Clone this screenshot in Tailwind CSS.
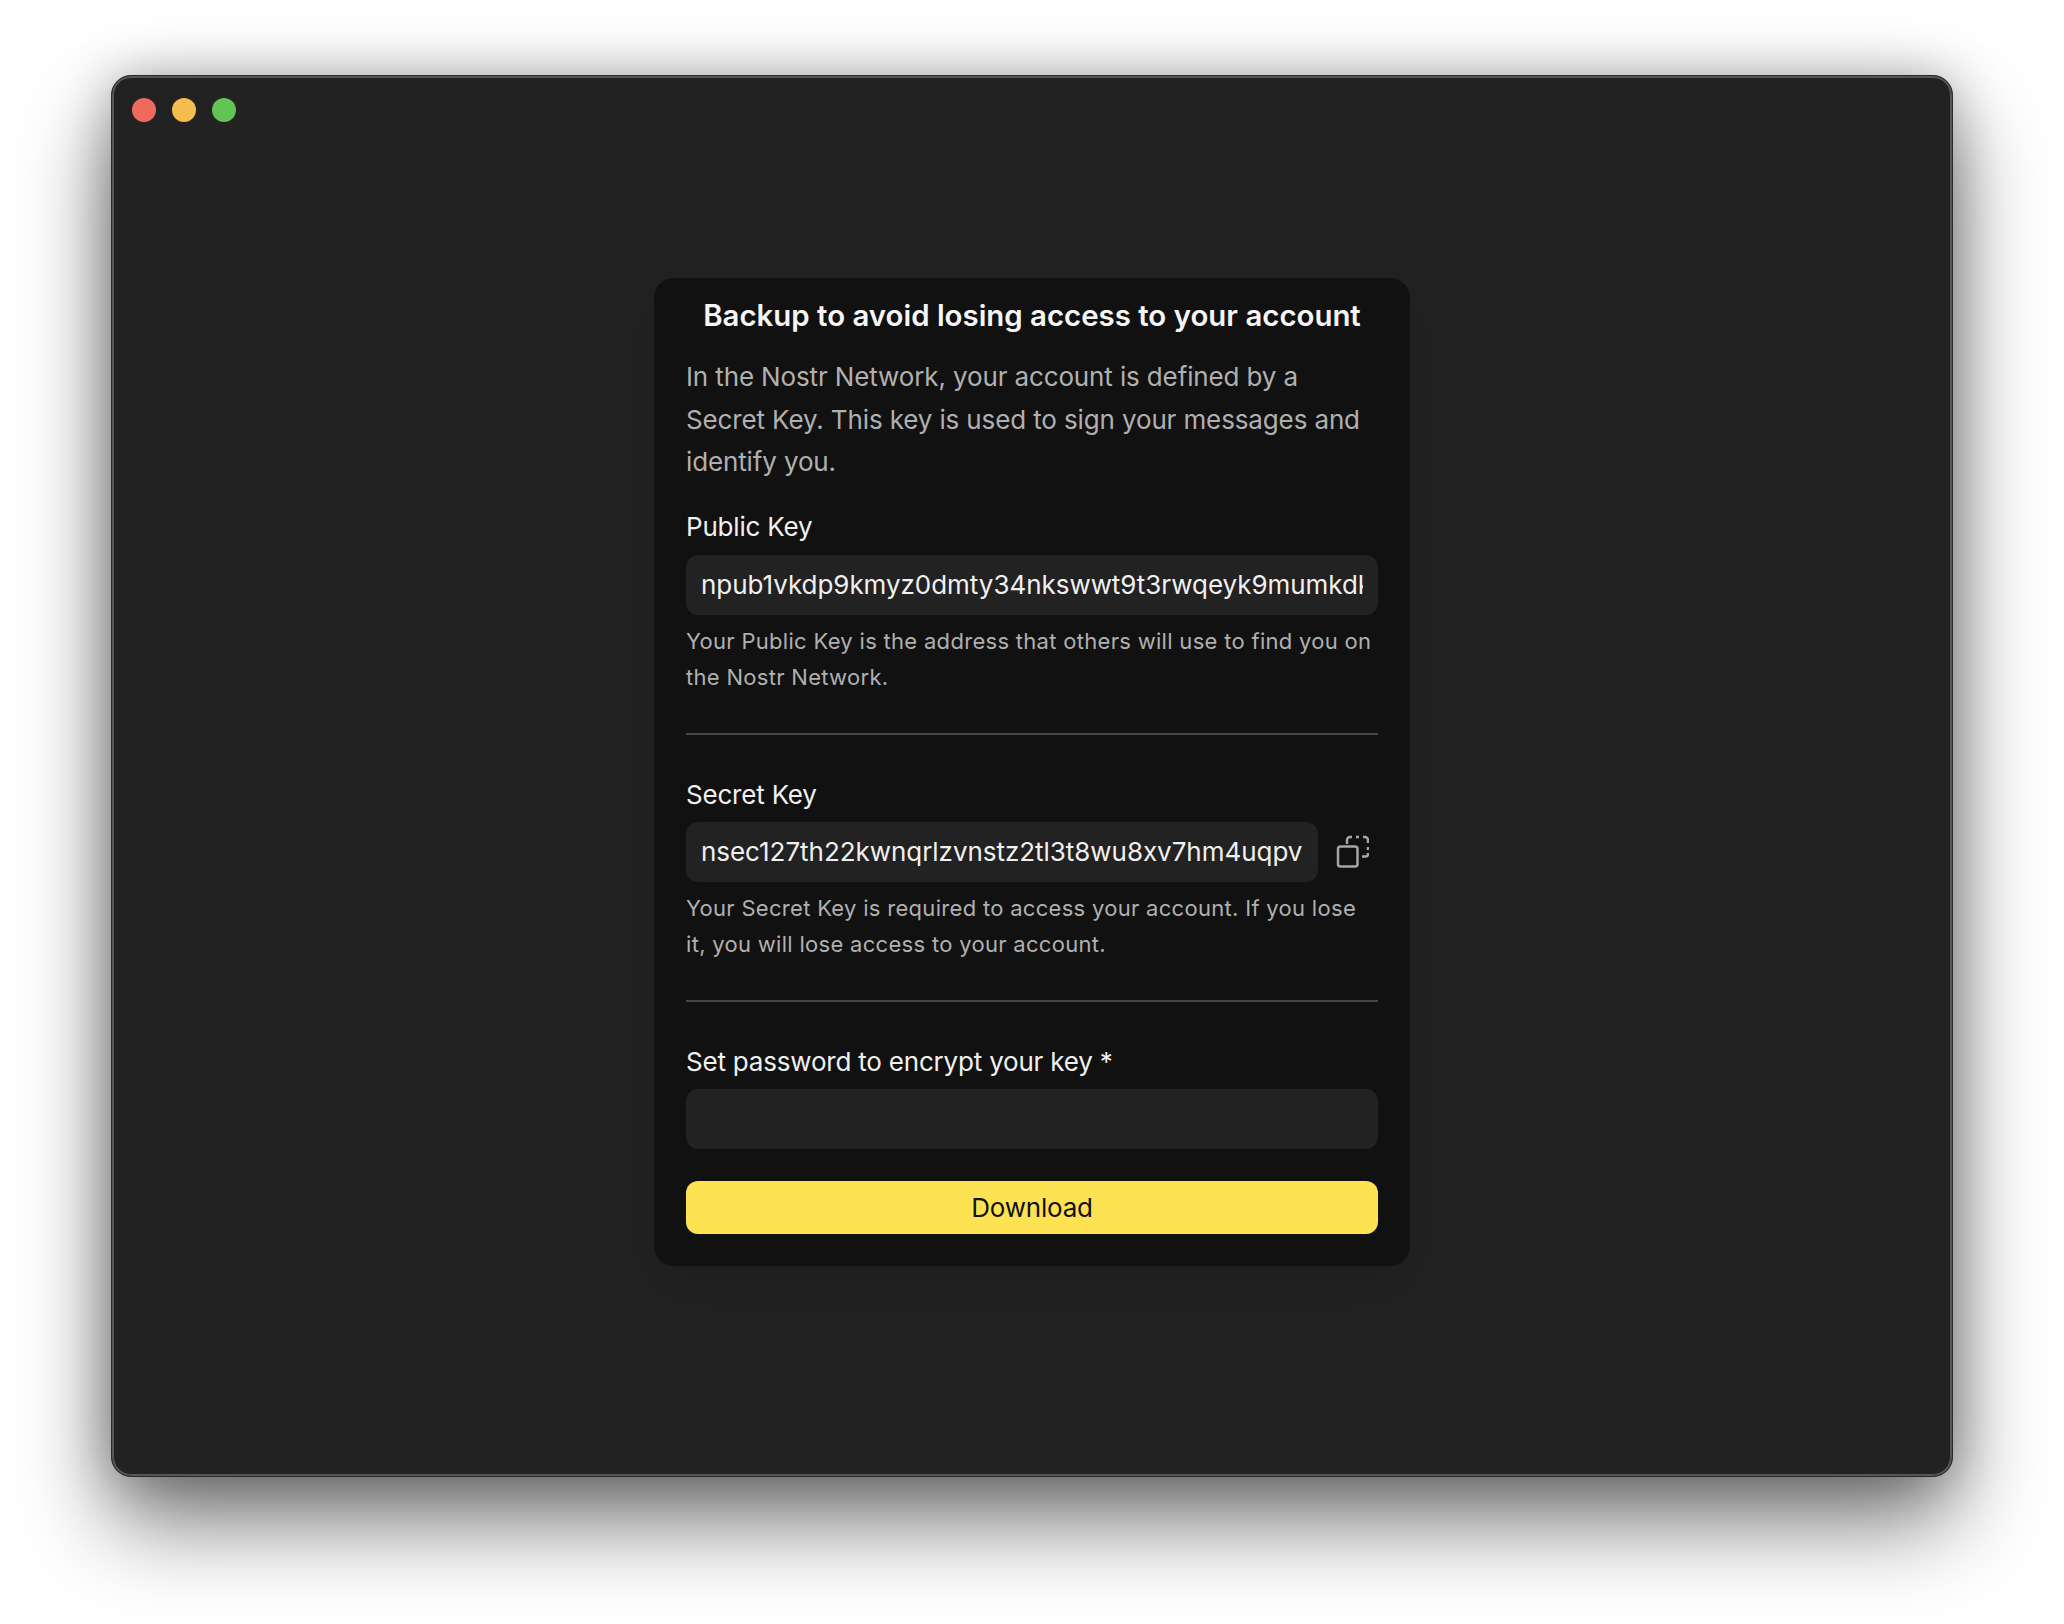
<!DOCTYPE html>
<html lang="en">
<head>
  <meta charset="UTF-8" />
  <title>Backup</title>
  <script src="https://cdn.jsdelivr.net/npm/@tailwindcss/browser@4"></script>
</head>
<body class="bg-white w-[2064px] h-[1624px] overflow-hidden font-['Inter',sans-serif]">
  <div class="pl-[111px] pt-[75px]">
    <div class="w-[1842px] h-[1402px] rounded-[20px] bg-[#222222] border border-[#2a2a2a] shadow-[inset_0_0_0_2px_#555555,0_44px_90px_rgba(0,0,0,0.55),0_0_50px_rgba(0,0,0,0.25)] pt-[22px] px-[20px]">
      <div class="flex gap-[16px]">
        <div class="w-6 h-6 rounded-full bg-[#ee6a5f]"></div>
        <div class="w-6 h-6 rounded-full bg-[#f5bd4f]"></div>
        <div class="w-6 h-6 rounded-full bg-[#61c454]"></div>
      </div>

      <div class="w-[756px] ml-[522px] mt-[156px] bg-[#111111] rounded-[20px] px-8 pb-8 shadow-[0_20px_60px_rgba(0,0,0,0.12)]">
        <h2 class="pt-[19px] text-[29.4px] leading-[38px] font-semibold text-center text-[#f5f5f5]">Backup to avoid losing access to your account</h2>
        <p class="mt-[21px] text-[26px] tracking-[-0.13px] leading-[42.5px] text-[#b0b0b0]">In the Nostr Network, your account is defined by a Secret Key. This key is used to sign your messages and identify you.</p>

        <div class="mt-[25px] text-[26px] tracking-[-0.2px] leading-[36px] text-[#f0f0f0]">Public Key</div>
        <div class="mt-[10px] h-[60px] rounded-xl bg-[#222222] px-[15px] flex items-center">
          <input value="npub1vkdp9kmyz0dmty34nkswwt9t3rwqeyk9mumkdkvqsxrgj5vvrpwqxnjgfz" readonly class="w-full bg-transparent outline-none text-[26px] tracking-[-0.04px] text-[#f0f0f0]" />
        </div>
        <p class="mt-[8px] text-[22px] leading-[36px] tracking-[0.3px] text-[#b0b0b0]">Your Public Key is the address that others will use to find you on the Nostr Network.</p>
        <div class="mt-[38px] h-[2px] bg-[#444444]"></div>

        <div class="mt-[42px] text-[26px] tracking-[-0.2px] leading-[36px] text-[#f0f0f0]">Secret Key</div>
        <div class="mt-[9px] flex items-center">
          <div class="w-[632px] h-[60px] rounded-xl bg-[#222222] px-[15px] flex items-center">
            <input value="nsec127th22kwnqrlzvnstz2tl3t8wu8xv7hm4uqpv" readonly class="w-full bg-transparent outline-none text-[26px] tracking-[-0.04px] text-[#f0f0f0]" />
          </div>
          <svg class="ml-[17px]" width="34" height="34" viewBox="0 0 34 34" fill="none" stroke="#a6a6a6" stroke-width="2.5">
            <rect x="3" y="11.5" width="19.5" height="20" rx="2.5" />
            <path d="M12 9V5a3 3 0 0 1 3-3h2M21 2h3M28 2h2a3 3 0 0 1 3 3v3M33 12v3M33 18v1a2.5 2.5 0 0 1-2.5 2.5H27" />
          </svg>
        </div>
        <p class="mt-[8px] text-[22px] leading-[36px] tracking-[0.3px] text-[#b0b0b0]">Your Secret Key is required to access your account. If you lose it, you will lose access to your account.</p>
        <div class="mt-[38px] h-[2px] bg-[#444444]"></div>

        <div class="mt-[42px] text-[26px] tracking-[-0.2px] leading-[36px] text-[#f0f0f0]">Set password to encrypt your key *</div>
        <div class="mt-[9px] h-[60px] rounded-xl bg-[#222222]"></div>
        <button class="mt-[32px] w-full h-[53px] rounded-xl bg-[#fde352] text-[26px] tracking-[-0.2px] text-[#111111]">Download</button>
      </div>
    </div>
  </div>
</body>
</html>
